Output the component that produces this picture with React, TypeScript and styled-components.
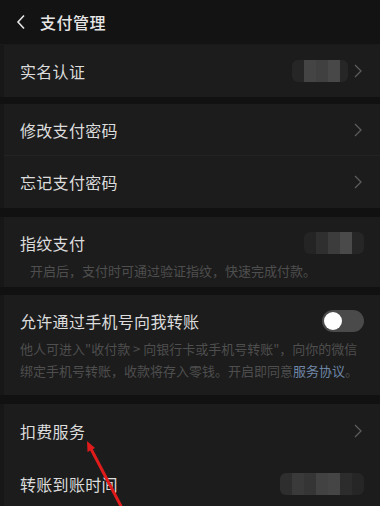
import React from "react";
import styled, { createGlobalStyle } from "styled-components";

const Global = createGlobalStyle`
  html, body { margin: 0; padding: 0; background: #111111; }
  body { font-family: "Noto Sans CJK SC", "Noto Sans", sans-serif; overflow: hidden; }
  * { box-sizing: border-box; }
`;

const Page = styled.div`
  position: relative;
  width: 380px;
  height: 506px;
  overflow: hidden;
  background: #111111;
  display: flex;
  flex-direction: column;
`;

const Header = styled.div`
  height: 45px;
  display: flex;
  align-items: center;
  padding-left: 16px;
  gap: 14px;
  background: #131313;
  border-bottom: 1px solid #1a1a1a;
  flex-shrink: 0;
`;

const Title = styled.div`
  color: #e6e6e6;
  font-size: 16px;
  font-weight: 500;
  letter-spacing: 0.5px;
`;

const Group = styled.div<{ $gap?: number }>`
  margin-top: ${(p) => p.$gap ?? 0}px;
  border-left: 4px solid #171717;
  background: #1c1c1c;
  display: flex;
  flex-direction: column;
  flex-shrink: 0;
`;

const Row = styled.div<{ $h?: number; $divider?: boolean }>`
  position: relative;
  height: ${(p) => p.$h ?? 52}px;
  display: flex;
  align-items: center;
  justify-content: space-between;
  padding: 0 16px 0 16px;
  border-bottom: ${(p) => (p.$divider ? "1px solid #232323" : "none")};
`;

const Label = styled.div`
  color: #dcdcdc;
  font-size: 16px;
  letter-spacing: 0.3px;
`;

const Block = styled.div<{ $h: number }>`
  height: ${(p) => p.$h}px;
  padding: 12px 16px 0 16px;
  display: flex;
  flex-direction: column;
`;

const BlockTop = styled.div`
  height: 28px;
  display: flex;
  align-items: center;
  justify-content: space-between;
`;

const Desc = styled.div<{ $indent?: number }>`
  margin-top: 3px;
  padding-left: ${(p) => p.$indent ?? 0}px;
  color: #4e4e4e;
  font-size: 13px;
  line-height: 22px;
  white-space: nowrap;
  letter-spacing: 0px;
`;

const Link = styled.span`
  color: #6f86a6;
`;

const Chevron = styled.svg`
  width: 8px;
  height: 14px;
  margin-right: 2px;
`;

const Blur = styled.div<{ $w: number }>`
  width: ${(p) => p.$w}px;
  height: 22px;
  display: flex;
  align-items: stretch;
  border-radius: 6px;
  overflow: hidden;
`;

const Pix = styled.div<{ $c: string; $w: number }>`
  width: ${(p) => p.$w}px;
  background: ${(p) => p.$c};
`;

const Toggle = styled.div`
  width: 42px;
  height: 22px;
  border-radius: 11px;
  background: #4a4a4a;
  display: flex;
  align-items: center;
  padding-left: 2px;
`;

const Knob = styled.div`
  width: 18px;
  height: 18px;
  border-radius: 50%;
  background: #ffffff;
`;

const RightWrap = styled.div`
  display: flex;
  align-items: center;
  gap: 6px;
`;

const ArrowOverlay = styled.svg`
  position: absolute;
  left: 0;
  top: 0;
  pointer-events: none;
`;

const ChevronIcon = () => (
  <Chevron viewBox="0 0 8 14">
    <path d="M1 1 L7 7 L1 13" fill="none" stroke="#5c5c5c" strokeWidth="1.3" />
  </Chevron>
);

const Pixelated = ({ cells }: { cells: [string, number][] }) => {
  const w = cells.reduce((s, c) => s + c[1], 0);
  return (
    <Blur $w={w}>
      {cells.map(([c, cw], i) => (
        <Pix key={i} $c={c} $w={cw} />
      ))}
    </Blur>
  );
};

export default function App() {
  return (
    <Page>
      <Global />
      <Header>
        <svg width="10" height="16" viewBox="0 0 10 16">
          <path d="M8 1.5 L2 8 L8 14.5" fill="none" stroke="#e6e6e6" strokeWidth="1.6" />
        </svg>
        <Title>支付管理</Title>
      </Header>

      <Group>
        <Row $h={52}>
          <Label>实名认证</Label>
          <RightWrap>
            <Pixelated
              cells={[
                ["#262626", 12],
                ["#444444", 12],
                ["#404040", 12],
                ["#484848", 12],
                ["#262626", 8],
              ]}
            />
            <ChevronIcon />
          </RightWrap>
        </Row>
      </Group>

      <Group $gap={7}>
        <Row $divider>
          <Label>修改支付密码</Label>
          <ChevronIcon />
        </Row>
        <Row>
          <Label>忘记支付密码</Label>
          <ChevronIcon />
        </Row>
      </Group>

      <Group $gap={9}>
        <Block $h={70}>
          <BlockTop>
            <Label>指纹支付</Label>
            <Pixelated
              cells={[
                ["#242424", 12],
                ["#2f2f2f", 12],
                ["#3c3c3c", 12],
                ["#4a4a4a", 12],
                ["#262626", 12],
              ]}
            />
          </BlockTop>
          <Desc $indent={10}>开启后，支付时可通过验证指纹，快速完成付款。</Desc>
        </Block>
      </Group>

      <Group $gap={8}>
        <Block $h={100}>
          <BlockTop>
            <Label>允许通过手机号向我转账</Label>
            <Toggle>
              <Knob />
            </Toggle>
          </BlockTop>
          <Desc>
            他人可进入"收付款 &gt; 向银行卡或手机号转账"，向你的微信
            <br />
            绑定手机号转账，收款将存入零钱。开启即同意<Link>服务协议</Link>。
          </Desc>
        </Block>
      </Group>

      <Group $gap={9}>
        <Row $h={54}>
          <Label>扣费服务</Label>
          <ChevronIcon />
        </Row>
        <Row $h={52}>
          <Label>转账到账时间</Label>
          <Pixelated
            cells={[
              ["#2e2e2e", 12],
              ["#3a3a3a", 12],
              ["#353535", 12],
              ["#424242", 12],
              ["#454545", 12],
              ["#2c2c2c", 12],
              ["#262626", 12],
            ]}
          />
        </Row>
      </Group>

      <ArrowOverlay width="380" height="506" viewBox="0 0 380 506">
        <line x1="90" y1="447" x2="123" y2="510" stroke="#e01b1b" strokeWidth="3" />
        <path d="M87 441 L87.5 452 L95 448 Z" fill="#e01b1b" />
      </ArrowOverlay>
    </Page>
  );
}
